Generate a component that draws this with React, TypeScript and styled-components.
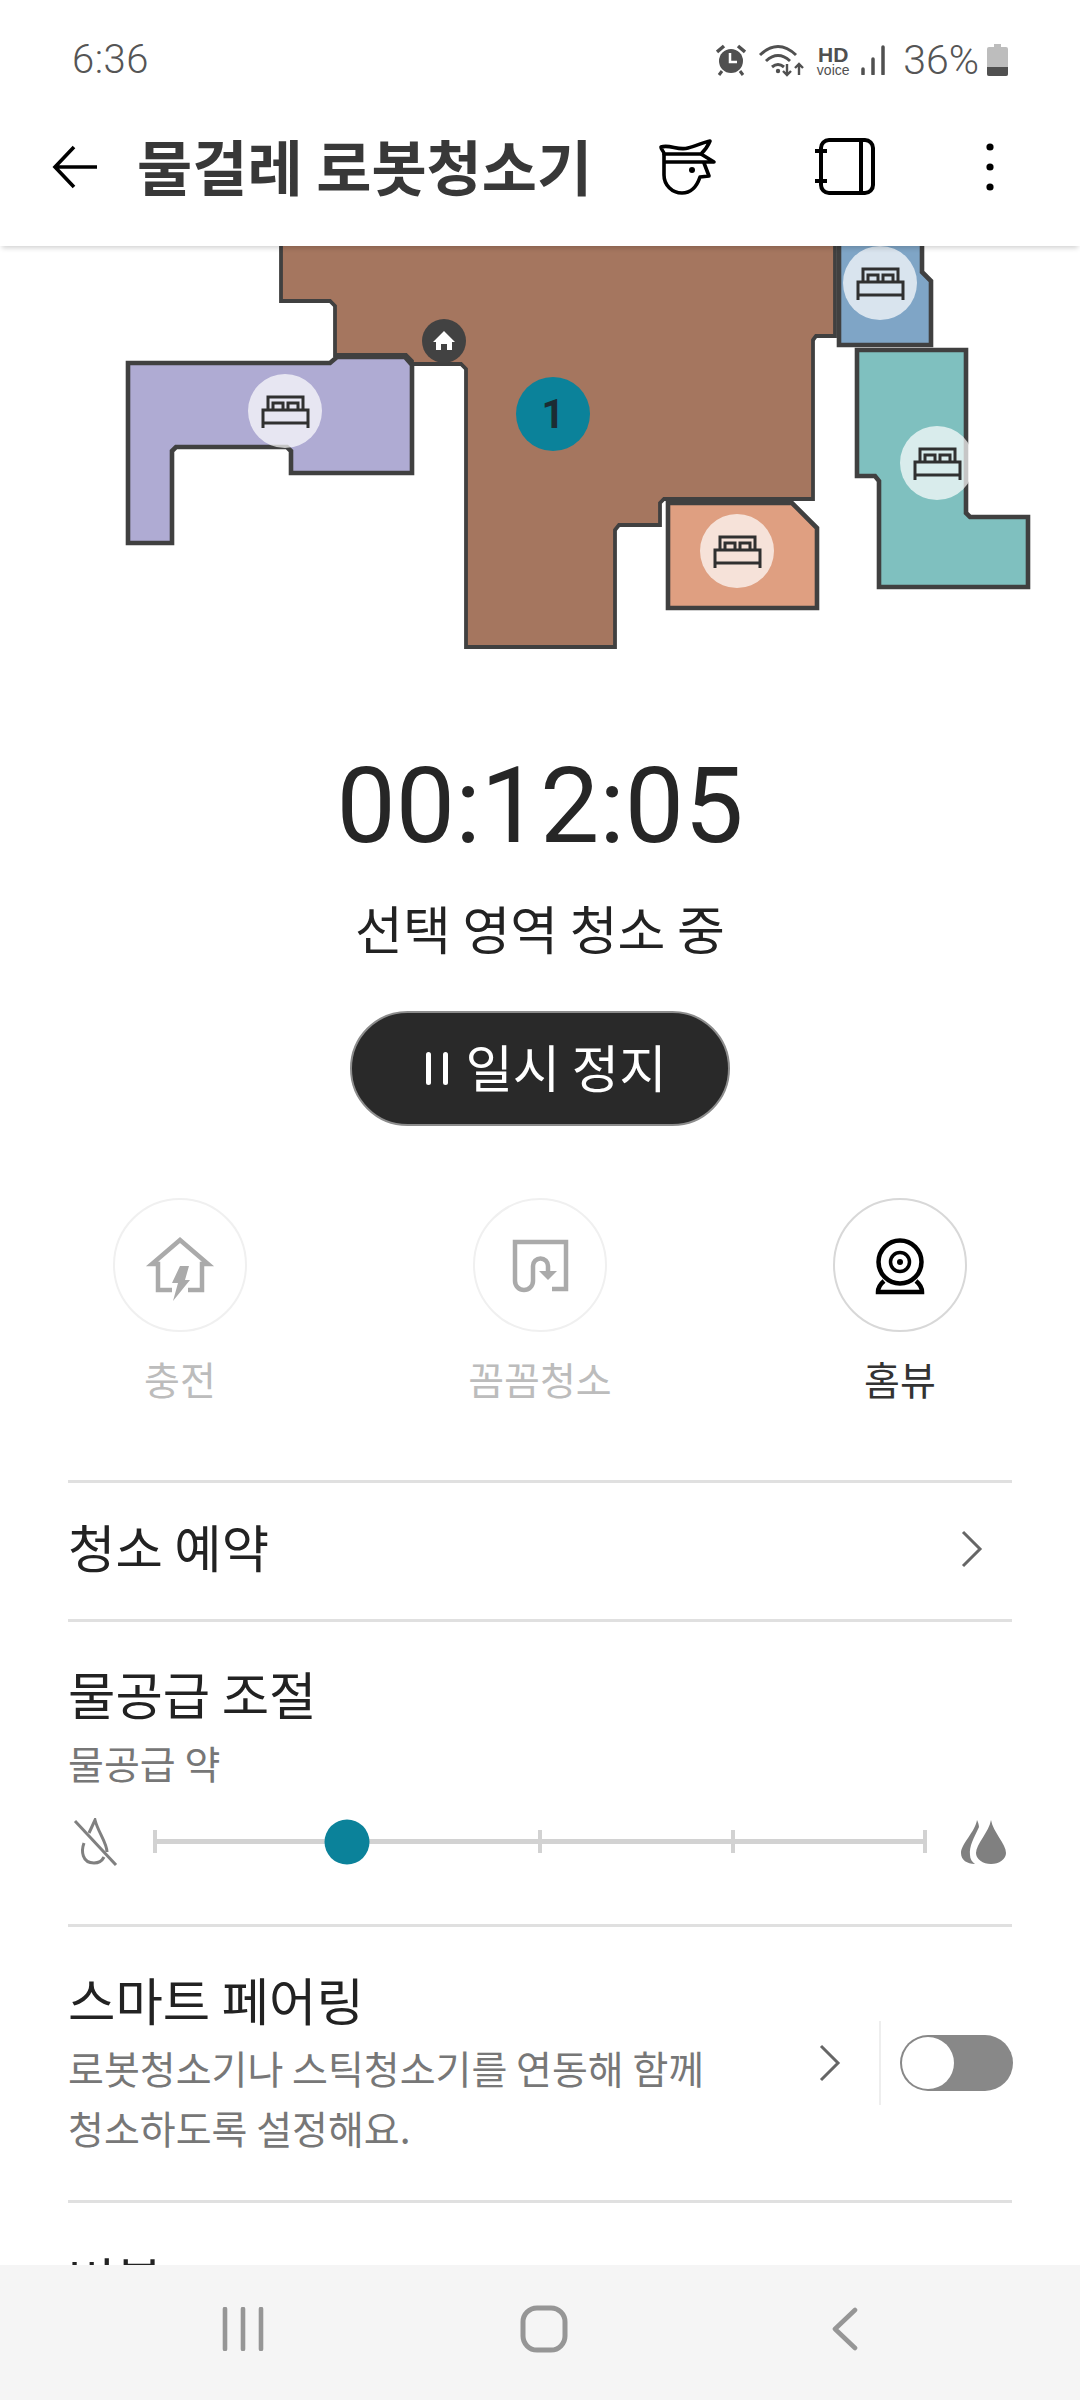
import { createGlobalStyle } from "styled-components"
import styled from "styled-components"

const GlobalStyle = createGlobalStyle`
    html, body {
        margin: 0;
        padding: 0;
        background: #ffffff;
    }

    * {
        box-sizing: border-box;
    }

    svg {
        display: block;
        flex-shrink: 0;
    }
`

const KR = `"Noto Sans CJK KR", "Noto Sans", sans-serif`

const Screen = styled.div`
    display: flex;
    flex-direction: column;
    width: 1080px;
    height: 2400px;
    overflow: hidden;
    background: #ffffff;
    font-family: ${KR};
    color: #222222;
`

const StatusBar = styled.div`
    display: flex;
    justify-content: space-between;
    align-items: center;
    height: 120px;
    padding: 0 72px 0 72px;
    color: #555555;
`

const StatusTime = styled.div`
    font-family: Roboto, sans-serif;
    font-weight: 300;
    font-size: 40px;
    line-height: 40px;
    letter-spacing: 0.5px;
`

const StatusIcons = styled.div`
    display: flex;
    align-items: center;
    gap: 11px;
`

const HdVoice = styled.div`
    display: flex;
    flex-direction: column;
    align-items: center;
    width: 32px;
    font-family: "Liberation Sans", sans-serif;
    color: #505050;

    b {
        font-size: 21px;
        line-height: 19px;
    }

    span {
        font-size: 14px;
        line-height: 12px;
    }
`

const Percent = styled.div`
    margin-left: 4px;
    margin-right: -3px;
    font-family: Roboto, sans-serif;
    font-weight: 300;
    font-size: 41px;
    line-height: 40px;
`

const Header = styled.header`
    position: relative;
    z-index: 2;
    display: flex;
    align-items: center;
    height: 126px;
    padding: 0 0 32px 52px;
    background: #ffffff;
    box-shadow: 0 4px 5px -2px rgba(0, 0, 0, 0.18);
`

const Title = styled.h1`
    margin: 0 0 4px 39px;
    width: 522px;
    font-size: 60px;
    font-weight: 700;
    line-height: 70px;
    color: #383838;
    white-space: nowrap;
`

const HeaderIcon = styled.div<{ $gap: number }>`
    margin-left: ${p => p.$gap}px;
    display: flex;
`

const Content = styled.main`
    flex: 1;
    min-height: 0;
    overflow: hidden;
`

const RoomMap = styled.svg`
    width: 1080px;
    height: 403px;
`

const MapNumber = styled.text`
    font-family: Roboto, sans-serif;
    font-weight: 700;
    font-size: 40px;
    fill: #1c2c33;
    text-anchor: middle;
`

const Timer = styled.div`
    margin-top: 97px;
    font-family: Roboto, sans-serif;
    font-size: 105.5px;
    line-height: 120px;
    text-align: center;
    color: #262626;
`

const CleanState = styled.div`
    margin-top: 27px;
    font-size: 52px;
    line-height: 70px;
    text-align: center;
    color: #222222;
`

const PauseButton = styled.div`
    display: flex;
    justify-content: center;
    align-items: center;
    gap: 17px;
    width: 380px;
    height: 115px;
    margin: 48px auto 0;
    padding-left: 13px;
    border: 2px solid #8c8c8c;
    border-radius: 58px;
    background: #292929;
    color: #ffffff;
`

const PauseLabel = styled.span`
    margin-bottom: 6px;
    font-size: 51.5px;
    line-height: 60px;
`

const PauseBars = styled.div`
    display: flex;
    gap: 12px;

    i {
        width: 5px;
        height: 33px;
        border-radius: 3px;
        background: #ffffff;
    }
`

const Actions = styled.div`
    display: grid;
    grid-template-columns: repeat(3, 360px);
    margin-top: 72px;
`

const Action = styled.div`
    display: flex;
    flex-direction: column;
    align-items: center;
    gap: 21px;
`

const ActionCircle = styled.div<{ $active?: boolean }>`
    display: flex;
    justify-content: center;
    align-items: center;
    width: 134px;
    height: 134px;
    border: 2px solid ${p => (p.$active ? "#d8d8d8" : "#f0f0f0")};
    border-radius: 50%;
`

const ActionLabel = styled.div<{ $active?: boolean }>`
    font-size: 39px;
    line-height: 50px;
    color: ${p => (p.$active ? "#333333" : "#bcbcbc")};
`

const List = styled.div`
    margin: 77px 68px 0;
`

const ListRow = styled.section<{ $pad: string }>`
    padding: ${p => p.$pad};
    border-top: 3px solid #e0e0e0;
`

const RowLine = styled.div`
    display: flex;
    justify-content: space-between;
    align-items: center;
`

const RowTitle = styled.div`
    font-size: 51.5px;
    line-height: 60px;
    color: #222222;
`

const RowSub = styled.div<{ $top: number }>`
    margin-top: ${p => p.$top}px;
    font-size: 39px;
    line-height: 60.5px;
    color: #777777;
`

const RowChevron = styled.div`
    margin: 6px 28px 0 0;
`

const SliderRow = styled.div`
    display: flex;
    justify-content: space-between;
    align-items: center;
    margin-top: 25px;
    padding: 0 4px;
`

const Track = styled.div`
    position: relative;
    display: flex;
    justify-content: space-between;
    align-items: center;
    width: 774px;
    height: 23px;

    &::before {
        content: "";
        position: absolute;
        left: 2px;
        right: 2px;
        top: 9px;
        height: 5px;
        background: #d2d2d2;
    }
`

const Tick = styled.i`
    width: 4px;
    height: 23px;
    background: #d2d2d2;
`

const Thumb = styled.div`
    position: absolute;
    top: 50%;
    width: 45px;
    height: 45px;
    border-radius: 50%;
    background: #0b829a;
    transform: translate(-50%, -50%);
`

const PairingControls = styled.div`
    display: flex;
    align-items: center;
    margin-right: -1px;
`

const VerticalRule = styled.div`
    width: 2px;
    height: 84px;
    margin: 0 19px 0 37px;
    background: #eeeeee;
`

const Toggle = styled.div`
    display: flex;
    align-items: center;
    width: 113px;
    height: 56px;
    padding: 2px;
    border-radius: 28px;
    background: #888888;

    &::after {
        content: "";
        width: 52px;
        height: 52px;
        border-radius: 50%;
        background: #ffffff;
    }
`

const NavBar = styled.nav`
    display: grid;
    grid-template-columns: repeat(3, 301px);
    justify-items: center;
    align-items: center;
    flex-shrink: 0;
    height: 135px;
    padding: 0 0 8px 92px;
    background: #f5f5f5;
`

const Bed = ({ x, y }: { x: number; y: number }) => (
    <g transform={`translate(${x} ${y})`}>
        <circle r="37" fill="#ffffff" fillOpacity="0.7" />
        <g fill="none" stroke="#303030" strokeWidth="3">
            <path d="M-17 -1V-14H18V-1" />
            <path d="M-12 -1V-8H-2V-1M3 -1V-8H13V-1" />
            <path d="M-22 17V-1H23V17M-22 12H23" />
        </g>
    </g>
)

const Rooms = () => (
    <RoomMap viewBox="0 246 1080 403">
        <g stroke="#404040" strokeLinejoin="miter">
            <path
                fill="#a5765f"
                strokeWidth="3.8"
                d="M281 240V301H330L335 306V355H406L412 361V364H461L466 369V647H615V530L619 525H660V503L664 499H813V340L816 336H835V240Z"
            />
            <path fill="#7fa5c6" strokeWidth="4.6" d="M839 240V345H931V281L922 272V240Z" />
            <path
                fill="#7fc0bf"
                strokeWidth="4.6"
                d="M857 350H966V513L970 517H1028V587H879V481L875 476H857Z"
            />
            <path fill="#df9f81" strokeWidth="4.6" d="M668 503H792L817 528V608H668Z" />
            <path
                fill="#afabd3"
                strokeWidth="4.6"
                d="M128 363H330L337 357H405L412 365V473H291V451L287 447H176L172 451V543H128Z"
            />
        </g>
        <Bed x={285} y={411} />
        <Bed x={880} y={283} />
        <Bed x={937} y={463} />
        <Bed x={737} y={551} />
        <circle cx="444" cy="341" r="22" fill="#424242" />
        <path d="M444 331L433 342H436V350H441V344H447V350H452V342H455Z" fill="#ffffff" />
        <circle cx="553" cy="414" r="37" fill="#0b829a" />
        <MapNumber x="553" y="428">1</MapNumber>
    </RoomMap>
)

const Chevron = () => (
    <svg width="24" height="40" viewBox="0 0 24 40">
        <path d="M3 3L20 20L3 37" fill="none" stroke="#666666" strokeWidth="3" />
    </svg>
)

export default function App() {
    const waterLevel = 1
    return (
        <Screen>
            <GlobalStyle />
            <StatusBar>
                <StatusTime>6:36</StatusTime>
                <StatusIcons>
                    <svg width="30" height="32" viewBox="0 0 30 32">
                        <circle cx="15" cy="17" r="12" fill="#505050" />
                        <path d="M1 8L8 2M29 8L22 2" stroke="#505050" strokeWidth="3.5" />
                        <path d="M6 27L3 31M24 27L27 31" stroke="#505050" strokeWidth="3" />
                        <path d="M14 9V18H21" fill="none" stroke="#ffffff" strokeWidth="2.5" />
                    </svg>
                    <svg width="49" height="36" viewBox="0 0 49 36">
                        <g fill="none" stroke="#505050" strokeWidth="3">
                            <path d="M3 13Q21 -4 39 13" />
                            <path d="M9 19Q21 8 33 19" />
                            <path d="M15 25Q21 20 27 25" />
                            <path d="M30 22V33M26 29L30 33L34 29" strokeWidth="2.4" />
                            <path d="M42 33V22M38 26L42 22L46 26" strokeWidth="2.4" />
                        </g>
                        <circle cx="21" cy="29" r="2.2" fill="#505050" />
                    </svg>
                    <HdVoice>
                        <b>HD</b>
                        <span>voice</span>
                    </HdVoice>
                    <svg width="28" height="30" viewBox="0 0 28 30">
                        <path d="M3 24V29M13 14V29M23 2V29" stroke="#505050" strokeWidth="3.5" strokeLinecap="round" />
                    </svg>
                    <Percent>36%</Percent>
                    <svg width="21" height="32" viewBox="0 0 21 32">
                        <path d="M7 0H14V3H19Q21 3 21 5V30Q21 32 19 32H2Q0 32 0 30V5Q0 3 2 3H7Z" fill="#bdbdbd" />
                        <path d="M0 23H21V30Q21 32 19 32H2Q0 32 0 30Z" fill="#505050" />
                    </svg>
                </StatusIcons>
            </StatusBar>

            <Header>
                <svg width="46" height="44" viewBox="0 0 46 44">
                    <path d="M22 2L3 22L22 42M3 22H45" fill="none" stroke="#000000" strokeWidth="3.6" />
                </svg>
                <Title>물걸레 로봇청소기</Title>
                <HeaderIcon $gap={-1}>
                    <svg width="60" height="60" viewBox="0 -2 60 60">
                        <g fill="none" stroke="#000000" strokeWidth="3.6" strokeLinejoin="round">
                            <path d="M3 8C12 5 20 12 30 9C38 7 46 3 52 2C50 7 47 11 43 15H6C6 12 3 11 3 8Z" />
                            <path d="M6 15V23H56L43 15M6 23V36C6 46 14 54 24 54C33 54 39 47 42 38L51 37L46 24" />
                        </g>
                        <circle cx="34" cy="31" r="3" fill="#000000" />
                    </svg>
                </HeaderIcon>
                <HeaderIcon $gap={97}>
                    <svg width="62" height="58" viewBox="0 0 62 58">
                        <g fill="none" stroke="#000000" strokeWidth="4">
                            <rect x="6" y="2" width="52" height="53" rx="8" />
                            <path d="M46 2V55M0 13H12M0 43H12" />
                        </g>
                    </svg>
                </HeaderIcon>
                <HeaderIcon $gap={109}>
                    <svg width="8" height="48" viewBox="0 0 8 48">
                        <circle cx="4" cy="4" r="3.6" fill="#000000" />
                        <circle cx="4" cy="24" r="3.6" fill="#000000" />
                        <circle cx="4" cy="44" r="3.6" fill="#000000" />
                    </svg>
                </HeaderIcon>
            </Header>

            <Content>
                <Rooms />
                <Timer>00:12:05</Timer>
                <CleanState>선택 영역 청소 중</CleanState>
                <PauseButton>
                    <PauseBars>
                        <i />
                        <i />
                    </PauseBars>
                    <PauseLabel>일시 정지</PauseLabel>
                </PauseButton>

                <Actions>
                    <Action>
                        <ActionCircle>
                            <svg width="80" height="80" viewBox="0 0 80 80">
                                <path
                                    d="M32 65H18V39H12L40 15L68 39H62V65H48"
                                    fill="none"
                                    stroke="#aaaaaa"
                                    strokeWidth="4.5"
                                />
                                <path d="M40 41H49L45 55H50L33 76L38 58H32Z" fill="#aaaaaa" />
                            </svg>
                        </ActionCircle>
                        <ActionLabel>충전</ActionLabel>
                    </Action>
                    <Action>
                        <ActionCircle>
                            <svg width="80" height="80" viewBox="0 0 80 80">
                                <path
                                    d="M52 64H66V17H15V56A9 9 0 0 0 33 56V41A7.5 7.5 0 0 1 48 41V48"
                                    fill="none"
                                    stroke="#aaaaaa"
                                    strokeWidth="4.5"
                                />
                                <path d="M39 46H57L48 55Z" fill="#aaaaaa" />
                            </svg>
                        </ActionCircle>
                        <ActionLabel>꼼꼼청소</ActionLabel>
                    </Action>
                    <Action>
                        <ActionCircle $active>
                            <svg width="80" height="80" viewBox="0 0 80 80">
                                <g fill="none" stroke="#000000">
                                    <circle cx="40" cy="37" r="21.5" strokeWidth="4.5" />
                                    <circle cx="40" cy="37" r="9.5" strokeWidth="3.5" />
                                    <path d="M24 56Q18 61 18 67H62Q62 61 56 56" strokeWidth="4.5" />
                                </g>
                                <circle cx="40" cy="37" r="3" fill="#000000" />
                            </svg>
                        </ActionCircle>
                        <ActionLabel $active>홈뷰</ActionLabel>
                    </Action>
                </Actions>

                <List>
                    <ListRow $pad="33px 0 43px">
                        <RowLine>
                            <RowTitle>청소 예약</RowTitle>
                            <RowChevron>
                                <Chevron />
                            </RowChevron>
                        </RowLine>
                    </ListRow>
                    <ListRow $pad="41px 0 58px">
                        <RowTitle>물공급 조절</RowTitle>
                        <RowSub $top={9}>물공급 약</RowSub>
                        <SliderRow>
                            <svg width="48" height="48" viewBox="0 0 48 48">
                                <g fill="none" stroke="#808080" strokeWidth="3">
                                    <path d="M17 15L23 2C26 14 35 25 35 34" />
                                    <path d="M12 25C9 33 10 45 22 45C27 45 30 43 32 39" />
                                    <path d="M3 3L44 47" />
                                </g>
                            </svg>
                            <Track>
                                <Tick />
                                <Tick />
                                <Tick />
                                <Tick />
                                <Tick />
                                <Thumb style={{ left: `${(waterLevel / 4) * 100}%` }} />
                            </Track>
                            <svg width="48" height="48" viewBox="0 0 48 48">
                                <path d="M31 2C33 14 46 26 46 35A15 11 0 0 1 16 35C16 26 29 14 31 2Z" fill="#808080" />
                                <path d="M17 2C19 6 19 9 19 9C14 20 9 28 10 37C10 41 12 44 15 46C7 46 1 42 1 35C1 26 15 14 17 2Z" fill="#808080" />
                            </svg>
                        </SliderRow>
                    </ListRow>
                    <ListRow $pad="42px 0 42px">
                        <RowLine>
                            <div>
                                <RowTitle>스마트 페어링</RowTitle>
                                <RowSub $top={8}>
                                    로봇청소기나 스틱청소기를 연동해 함께
                                    <br />
                                    청소하도록 설정해요.
                                </RowSub>
                            </div>
                            <PairingControls>
                                <Chevron />
                                <VerticalRule />
                                <Toggle />
                            </PairingControls>
                        </RowLine>
                    </ListRow>
                    <ListRow $pad="46px 0 0">
                        <RowTitle>버블</RowTitle>
                    </ListRow>
                </List>
            </Content>

            <NavBar>
                <svg width="42" height="44" viewBox="0 0 42 44">
                    <path d="M3 2V42M21 2V42M39 2V42" stroke="#969696" strokeWidth="4.6" strokeLinecap="round" />
                </svg>
                <svg width="48" height="48" viewBox="0 0 48 48">
                    <rect x="3" y="3" width="42" height="42" rx="14" fill="none" stroke="#969696" strokeWidth="5" />
                </svg>
                <svg width="26" height="44" viewBox="0 0 26 44">
                    <path d="M23 3L3 22L23 41" fill="none" stroke="#969696" strokeWidth="4.6" strokeLinecap="round" strokeLinejoin="round" />
                </svg>
            </NavBar>
        </Screen>
    )
}
